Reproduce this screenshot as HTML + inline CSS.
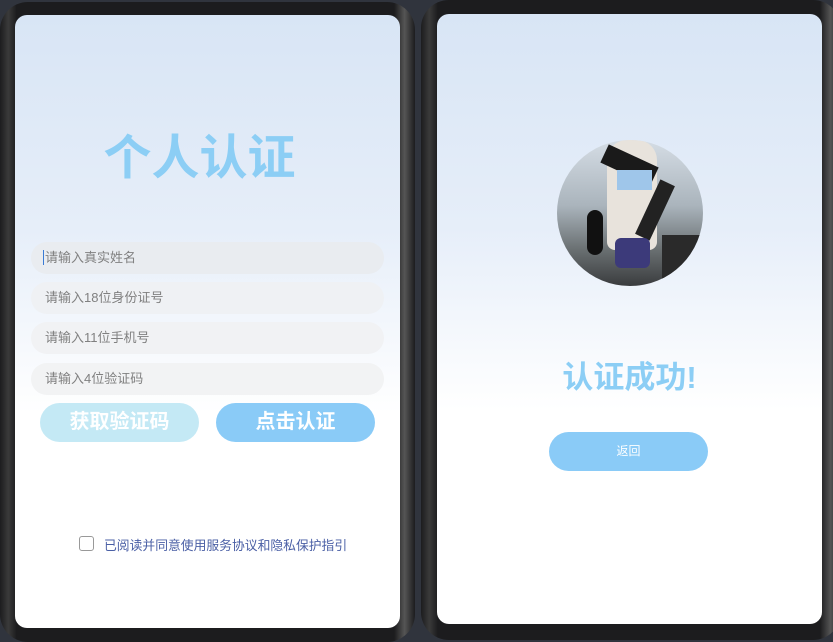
<!DOCTYPE html>
<html><head><meta charset="utf-8"><style>
*{margin:0;padding:0;box-sizing:border-box}
body{width:833px;height:632px;background:#30343d;position:relative;overflow:hidden;font-family:"Liberation Sans","Noto Sans CJK SC",sans-serif}
.dev{position:absolute;background:linear-gradient(90deg,#1c1c1e 0%,#3a3a3a 2%,#1c1c1e 4%,#1c1c1e 95%,#555 97.5%,#1c1c1e 100%);border-radius:28px}
.scr{position:absolute;border-radius:12px;background:linear-gradient(180deg,#d8e5f5 0%,#e6eef9 35%,#ffffff 65%,#fff 100%);overflow:hidden}
.in{position:absolute;left:16px;width:353px;height:32px;border-radius:16px;background:#eff1f4;font-size:13px;color:#808080;line-height:32px;padding-left:14px}
.btn{position:absolute;border-radius:20px;color:#fff;font-weight:bold;text-align:center}
</style></head><body>
<div class="dev" style="left:0;top:2px;width:415px;height:640px"></div>
<div class="dev" style="left:421px;top:0;width:420px;height:640px"></div>
<div class="scr" style="left:15px;top:15px;width:385px;height:613px">
 <div style="position:absolute;left:-8px;width:385px;top:114px;text-align:center;font-size:48px;line-height:60px;font-weight:bold;color:#8ccef5">个人认证</div>
 <div class="in" style="top:227px;background:#e9ecf0"><span style="border-left:1px solid #3a7bd5;margin-left:-2px;padding-left:1px">请输入真实姓名</span></div>
 <div class="in" style="top:267px">请输入18位身份证号</div>
 <div class="in" style="top:307px;background:#f1f2f4">请输入11位手机号</div>
 <div class="in" style="top:348px;background:#f2f3f4">请输入4位验证码</div>
 <div class="btn" style="left:25px;top:388px;width:159px;height:39px;line-height:39px;background:#c4e9f5;font-size:20px">获取验证码</div>
 <div class="btn" style="left:201px;top:388px;width:159px;height:39px;line-height:39px;background:#8acbf7;font-size:20px">点击认证</div>
 <div style="position:absolute;left:64px;top:521px;width:15px;height:15px;border:1px solid #999;border-radius:3px;background:#fff"></div>
 <div style="position:absolute;left:89px;top:520px;font-size:12.8px;color:#4a5fa5">已阅读并同意使用服务协议和隐私保护指引</div>
</div>
<div class="scr" style="left:437px;top:14px;width:385px;height:610px">
 <div style="position:absolute;left:120px;top:126px;width:146px;height:146px;border-radius:50%;overflow:hidden;background:linear-gradient(180deg,#d5dde5 0%,#aab4bc 45%,#6a7072 75%,#3a3c3e 100%)">
  <div style="position:absolute;left:50px;top:0;width:50px;height:110px;background:#e8e3dc;border-radius:20px 20px 8px 8px"></div>
  <div style="position:absolute;left:45px;top:15px;width:55px;height:20px;background:#1a1a1a;transform:rotate(25deg)"></div>
  <div style="position:absolute;left:60px;top:30px;width:35px;height:20px;background:#9fc6ea"></div>
  <div style="position:absolute;left:90px;top:40px;width:16px;height:60px;background:#222;transform:rotate(25deg)"></div>
  <div style="position:absolute;left:30px;top:70px;width:16px;height:45px;background:#111;border-radius:8px"></div>
  <div style="position:absolute;left:58px;top:98px;width:35px;height:30px;background:#3c3a7a;border-radius:6px"></div>
  <div style="position:absolute;left:105px;top:95px;width:45px;height:55px;background:#2a2a2a"></div>
 </div>
 <div style="position:absolute;left:0;width:385px;top:338px;text-align:center;font-size:31px;font-weight:bold;color:#8ccef5">认证成功!</div>
 <div class="btn" style="left:112px;top:418px;width:159px;height:39px;line-height:39px;background:#8acbf7;font-size:12px;font-weight:normal">返回</div>
</div>
</body></html>
